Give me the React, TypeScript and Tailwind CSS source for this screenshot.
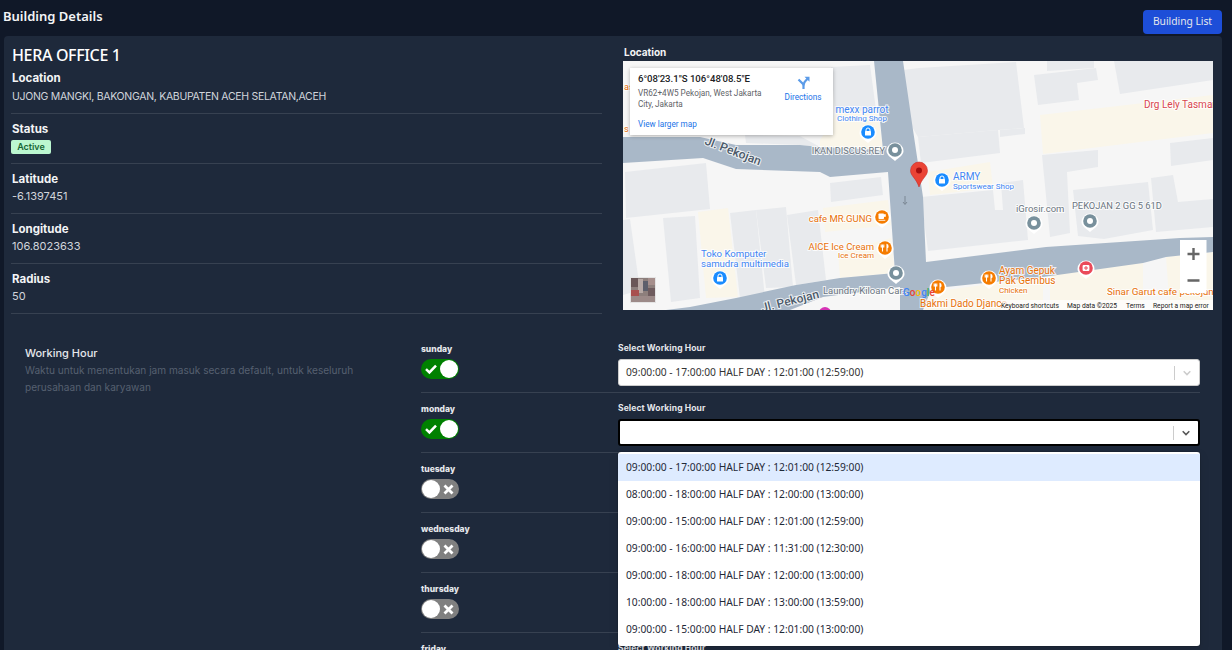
import React from "react";

const ROAD = "#a9b8c8";
const BLD = "#e8eaed";
const BEIGE = "#faf6ea";
const BLUE = "#4285f4";
const ORANGE = "#e8710a";

const beiges = [
  "1040,115 1213,95 1213,133 1043,154",
  "823,208 888,200 891,225 825,232",
  "838,253 891,238 895,273 840,278",
  "698,212 728,208 738,297 706,298",
  "839,110 877,108 883,150 820,147 820,140",
  "928,172 990,162 993,188 930,195",
  "931,292 1043,277 1043,310 925,310",
  "1050,273 1143,263 1143,310 1050,310",
  "1166,257 1213,252 1213,310 1170,310",
];
const buildings = [
  "903,70 919,68 1016,62 1024,128 998,130 918,137 905,115",
  "918,137 998,130 1000,153 921,163",
  "1000,130 1025,128 1025,134 1000,137",
  "1034,75 1096,68 1098,80 1077,83 1079,100 1038,105",
  "1114,61 1213,61 1213,80 1120,94",
  "1047,61 1094,61 1094,68 1047,71",
  "1170,143 1213,138 1213,160 1171,166",
  "1042,155 1098,150 1098,167 1067,172 1070,233 1050,237",
  "1073,190 1148,182 1153,230 1104,239 1078,236",
  "1151,178 1173,175 1178,202 1213,199 1213,227 1156,232",
  "921,197 993,190 995,210 1003,210 1001,183 1023,180 1028,240 928,251",
  "625,172 706,163 710,209 626,218",
  "830,183 881,177 883,195 831,202",
  "663,218 695,216 700,298 671,302",
  "730,213 756,210 765,298 740,298",
  "756,210 786,207 793,287 766,288",
  "787,215 818,210 826,280 796,285",
  "831,67 870,65 876,110 835,112",
  "745,135 800,136 820,147 800,145 746,143",
  "623,220 630,219 640,290 623,295",
];
const road =
  "874,61 903,61 913,130 923,197 926,262 1046,247 1180,238 1213,237 1213,252 1166,257 1143,263 1043,277 946,287 931,290 923,310 900,310 900,287 823,297 790,310 666,310 690,307 736,298 796,285 840,278 895,273 888,172 830,177 820,172 736,169 703,158 623,163 623,137 700,137 736,145 800,145 820,147 883,150";

function Pin({ x, y, color, kind }: { x: number; y: number; color: string; kind: "lock" | "ring" | "food" | "cup" | "plus" }) {
  return (
    <g transform={`translate(${x} ${y})`}>
      <path d="M-8.5 1 A8.5 8.5 0 0 1 8.5 1 C8.5 5 3.5 8 0 11 C-3.5 8 -8.5 5 -8.5 1Z" fill="#fff" />
      <circle r="6.8" fill={color} />
      {kind === "ring" && <circle r="3" fill="#fff" />}
      {kind === "lock" && (
        <g fill="#fff">
          <rect x="-3" y="-1" width="6" height="4.5" rx="0.5" />
          <path d="M-2 -1 V-2 A2 2 0 0 1 2 -2 V-1" fill="none" stroke="#fff" strokeWidth="1" />
        </g>
      )}
      {kind === "food" && (
        <g stroke="#fff" strokeWidth="1.1" fill="none">
          <path d="M-2.5 -3.5 V3.5 M-3.8 -3.5 V-1 H-1.2 V-3.5" />
          <path d="M2 3.5 V-3.5 C3.4 -3 3.4 0 2 0" />
        </g>
      )}
      {kind === "cup" && (
        <g fill="#fff">
          <rect x="-3.5" y="-3.5" width="5.5" height="5.5" rx="0.8" />
          <rect x="2" y="-3" width="1.8" height="3" rx="0.8" />
          <rect x="-3.5" y="2.8" width="6.8" height="0.9" />
        </g>
      )}
      {kind === "plus" && (
        <g fill="#fff">
          <rect x="-3.4" y="-3" width="6.8" height="6" rx="1" />
          <rect x="-0.5" y="-2" width="1" height="4" fill={color} />
          <rect x="-2" y="-0.5" width="4" height="1" fill={color} />
        </g>
      )}
    </g>
  );
}

function L({ x, y, c, s = 8.6, a, w, t, sw = 2 }: { x: number; y: number; c: string; s?: number; a?: "end" | "middle"; w?: number; t: string; sw?: number }) {
  return (
    <text
      x={x}
      y={y}
      fill={c}
      fontSize={s}
      fontWeight={w}
      textAnchor={a}
      stroke="#fff"
      strokeWidth={sw}
      strokeOpacity={0.8}
      paintOrder="stroke"
      fontFamily="Roboto, sans-serif"
    >
      {t}
    </text>
  );
}

function MapArt() {
  return (
    <svg viewBox="623 61 590 249" className="block w-full h-full" xmlns="http://www.w3.org/2000/svg">
      <rect x="623" y="61" width="590" height="249" fill="#f6f6f6" />
      {beiges.map((p) => (
        <polygon key={p} points={p} fill={BEIGE} />
      ))}
      {buildings.map((p) => (
        <polygon key={p} points={p} fill={BLD} />
      ))}
      <polygon points={road} fill={ROAD} />
      <path d="M905 196 V204 M903 202 L905 204.5 L907 202" stroke="#7b8794" strokeWidth="1" fill="none" />

      <g transform="rotate(21 733 151)">
        <L x={733} y={155} a="middle" c="#4d5b6b" s={12} t="Jl. Pekojan" w={500} />
      </g>
      <g transform="rotate(-14 790 301)">
        <L x={790} y={305} a="middle" c="#4d5b6b" s={12} t="Jl. Pekojan" w={500} />
      </g>

      <L x={1144} y={108} c="#d9464f" s={10} t="Drg Lely Tasman" />
      <L x={624} y={90} c={ORANGE} s={9} t="as" />
      <L x={624} y={132} c={ORANGE} s={9} t="s" />

      <L x={862} y={113} a="middle" c={BLUE} s={10} t="mexx parrot" />
      <L x={862} y={121} a="middle" c={BLUE} s={8} t="Clothing Shop" />
      <Pin x={868} y={132} color="#1a8cff" kind="lock" />

      <L x={885} y={154} a="end" c="#6b7580" s={9.2} t="IKAN DISCUS.REY" />
      <Pin x={895} y={150} color="#78909c" kind="ring" />

      <L x={953} y={180} c={BLUE} s={10} t="ARMY" />
      <L x={953} y={189} c={BLUE} s={8} t="Sportswear Shop" />
      <Pin x={942} y={180} color="#1a8cff" kind="lock" />

      <L x={1016} y={212} c="#6b7580" s={9.5} t="iGrosir.com" />
      <L x={1072} y={209} c="#6b7580" s={9.3} t="PEKOJAN 2 GG 5 61D" />
      <Pin x={1034} y={223} color="#78909c" kind="ring" />
      <Pin x={1090} y={221} color="#78909c" kind="ring" />

      <L x={872} y={222} a="end" c={ORANGE} s={9.5} t="cafe MR.GUNG" />
      <Pin x={882} y={217} color="#f57c00" kind="cup" />
      <L x={874} y={250} a="end" c={ORANGE} s={9.5} t="AICE Ice Cream" />
      <L x={874} y={258} a="end" c={ORANGE} s={8} t="Ice Cream" />
      <Pin x={885} y={248} color="#f57c00" kind="food" />
      <Pin x={896} y={273} color="#78909c" kind="ring" />

      <L x={701} y={257} c={BLUE} s={9.6} t="Toko Komputer" />
      <L x={701} y={267} c={BLUE} s={9.6} t="samudra multimedia" />
      <Pin x={720} y={278} color="#1a8cff" kind="lock" />

      <L x={823} y={294} c="#6b7580" s={9.5} t="Laundry Kiloan Car.." />
      <Pin x={938} y={287} color="#f57c00" kind="food" />
      <Pin x={989} y={278} color="#f57c00" kind="food" />
      <L x={999} y={274} c={ORANGE} s={10} t="Ayam Gepuk" />
      <L x={999} y={284} c={ORANGE} s={10} t="Pak Gembus" />
      <L x={999} y={293} c={ORANGE} s={8} t="Chicken" />
      <Pin x={1086} y={268} color="#ea4a5a" kind="plus" />
      <L x={1107} y={295} c={ORANGE} s={9.8} t="Sinar Garut cafe pekojan" />
      <L x={920} y={307} c={ORANGE} s={10} t="Bakmi Dado Djanco" />

      <circle cx="825" cy="313" r="6" fill="#d633b5" />

      <text x="903" y="296" fontSize="10" fontFamily="Roboto, sans-serif" fontWeight="500">
        <tspan fill="#4285f4">G</tspan>
        <tspan fill="#ea4335">o</tspan>
        <tspan fill="#fbbc05">o</tspan>
        <tspan fill="#4285f4">g</tspan>
        <tspan fill="#34a853">l</tspan>
        <tspan fill="#ea4335">e</tspan>
      </text>

      <rect x="1001" y="300" width="212" height="10" fill="#fff" fillOpacity="0.7" />
      <g fontSize="6.7" fill="#222" fontFamily="Roboto, sans-serif">
        <text x="1001" y="308">Keyboard shortcuts</text>
        <text x="1067" y="308">Map data ©2025</text>
        <text x="1126" y="308">Terms</text>
        <text x="1153" y="308">Report a map error</text>
      </g>

      <rect x="1180" y="240" width="26.5" height="53" fill="#fff" />
      <path d="M1193.5 248 V260 M1187.5 254 H1199.5 M1187.5 280.5 H1199.5" stroke="#666" strokeWidth="2.4" />

      <rect x="630" y="277" width="26" height="26" fill="#e4e4e4" />
      <rect x="631" y="278" width="24" height="24" fill="#8d7f7c" />
      <rect x="631" y="278" width="7" height="9" fill="#6a5758" />
      <rect x="638" y="279" width="5" height="14" fill="#b8aaa6" />
      <rect x="643" y="281" width="5" height="10" fill="#5d5f6b" />
      <rect x="648" y="278" width="7" height="7" fill="#a68f8c" />
      <rect x="631" y="290" width="8" height="6" fill="#a8504f" />
      <rect x="648" y="288" width="7" height="8" fill="#6f5c5e" />
      <rect x="631" y="296" width="24" height="6" fill="#9c8a88" />

      <path d="M919 187 C916 178 910.5 176 910.5 170.5 A8.5 8.5 0 0 1 927.5 170.5 C927.5 176 922 178 919 187Z" fill="#ea4335" stroke="#c5221f" strokeWidth="0.5" />
      <circle cx="919" cy="170.5" r="3" fill="#a50e0e" />
    </svg>
  );
}

function InfoWindow() {
  return (
    <div className="absolute left-[7px] top-[7px] w-[203px] h-[67px] bg-white shadow-[0_1px_4px_rgba(0,0,0,0.3)] font-['Roboto',sans-serif]">
      <div className="absolute left-[8px] top-[4px] text-[9.6px] leading-[14px] font-medium text-[#202124] whitespace-nowrap">6°08'23.1"S 106°48'08.5"E</div>
      <div className="absolute left-[8px] top-[20px] w-[130px] text-[8.2px] leading-[11px] text-[#5f6368]">VR62+4W5 Pekojan, West Jakarta City, Jakarta</div>
      <div className="absolute left-[8px] top-[50px] text-[8.2px] leading-[12px] text-[#1a73e8] whitespace-nowrap">View larger map</div>
      <div className="absolute left-[143px] top-[8px] w-[60px] flex flex-col items-center">
        <svg width="13" height="13" viewBox="0 0 13 13">
          <path d="M6.5 13 V8.5 L1.5 3.5" stroke="#5b9be8" strokeWidth="2.2" fill="none" />
          <path d="M6.5 9.5 C6.5 6.5 8 5 10.5 2.8" stroke="#5b9be8" strokeWidth="2.2" fill="none" />
          <path d="M7.5 0.8 H12.5 V5.8Z" fill="#5b9be8" />
        </svg>
        <div className="mt-[2px] text-[8.2px] leading-[12px] text-[#1a73e8] whitespace-nowrap">Directions</div>
      </div>
    </div>
  );
}

function Field({ label, value, first, narrow }: { label: string; value?: string; first?: boolean; narrow?: boolean }) {
  return (
    <div className={first ? "h-[45px] pt-[1px] border-b border-[#374151]" : "h-[50px] pt-[7px] border-b border-[#374151]"}>
      <div className="ml-px text-[11.5px] leading-4 font-bold text-[#f3f4f6] font-['Inter',sans-serif]">{label}</div>
      {value !== undefined ? (
        <div
          className={`ml-px leading-[18px] text-[#d1d5db] font-['Inter',sans-serif] whitespace-nowrap ${narrow ? "mt-[2px] text-[10.5px] tracking-[-0.3px]" : "text-[11px]"}`}
        >
          {value}
        </div>
      ) : (
        <div className="mt-[3px] w-[40px] h-[14px] rounded-[2px] bg-[#bbf7d0] flex items-center justify-center text-[9px] font-semibold text-[#166534] font-['Inter',sans-serif]">Active</div>
      )}
    </div>
  );
}

function Toggle({ on }: { on: boolean }) {
  return (
    <div className={`mt-[4px] w-[37.5px] h-[19.5px] rounded-full relative ${on ? "bg-[#008000]" : "bg-[#808080]"}`}>
      <div className={`absolute top-[1px] w-[17.5px] h-[17.5px] rounded-full bg-white ${on ? "right-[1px]" : "left-[1px]"}`} />
      {on ? (
        <svg className="absolute left-[4px] top-[3.5px]" width="12" height="12" viewBox="0 0 12 12">
          <path d="M1 6.2 L4.4 9.4 L11 2.6" stroke="#fff" strokeWidth="2.5" fill="none" />
        </svg>
      ) : (
        <svg className="absolute right-[4.5px] top-[4.5px]" width="11" height="11" viewBox="0 0 11 11">
          <path d="M1.5 1.5 L9.5 9.5 M9.5 1.5 L1.5 9.5" stroke="#fff" strokeWidth="2.8" fill="none" />
        </svg>
      )}
    </div>
  );
}

const options = [
  "09:00:00 - 17:00:00 HALF DAY : 12:01:00 (12:59:00)",
  "08:00:00 - 18:00:00 HALF DAY : 12:00:00 (13:00:00)",
  "09:00:00 - 15:00:00 HALF DAY : 12:01:00 (12:59:00)",
  "09:00:00 - 16:00:00 HALF DAY : 11:31:00 (12:30:00)",
  "09:00:00 - 18:00:00 HALF DAY : 12:00:00 (13:00:00)",
  "10:00:00 - 18:00:00 HALF DAY : 13:00:00 (13:59:00)",
  "09:00:00 - 15:00:00 HALF DAY : 12:01:00 (13:00:00)",
];

function Select({ value, open }: { value?: string; open?: boolean }) {
  return (
    <div className="relative">
      <div className={`h-[27px] bg-white rounded-[3px] flex items-center ${open ? "border-2 border-black" : "border border-[#cccccc]"}`}>
        <div className={`flex-1 text-[10.25px] text-[#333333] whitespace-nowrap font-['Noto_Sans',sans-serif] ${open ? "pl-[6px]" : "pl-[7px]"}`}>{value}</div>
        <div className="w-px h-[14px] bg-[#cccccc]" />
        <div className="w-[24px] flex justify-center">
          <svg width="12" height="12" viewBox="0 0 20 20">
            <path d="M4.5 7.2 L10 12.7 L15.5 7.2" stroke={open ? "#555555" : "#cccccc"} strokeWidth="2.6" fill="none" />
          </svg>
        </div>
      </div>
      {open && (
        <div className="absolute z-10 left-0 right-0 top-[33px] bg-white rounded-[3px] pt-[2px] pb-[3px] shadow-[0_0_0_1px_rgba(0,0,0,0.1),0_4px_11px_rgba(0,0,0,0.1)]">
          {options.map((o, i) => (
            <div
              key={i}
              className={`h-[27px] pl-[8px] flex items-center text-[10.25px] text-[#1f2937] whitespace-nowrap font-['Noto_Sans',sans-serif] ${i === 0 ? "bg-[#deebff]" : ""}`}
            >
              {o}
            </div>
          ))}
        </div>
      )}
    </div>
  );
}

function DayRow({ day, on, value, open }: { day: string; on: boolean; value?: string; open?: boolean }) {
  return (
    <div className="h-[60px] pt-[9px] border-b border-[#374151] flex">
      <div className="w-[197px]">
        <div className="text-[8.5px] leading-3 mt-[1px] font-extrabold text-[#e5e7eb] font-['Inter',sans-serif]">{day}</div>
        <Toggle on={on} />
      </div>
      <div className="flex-1">
        <div className="text-[8.5px] leading-3 font-bold text-[#e5e7eb] font-['Inter',sans-serif] tracking-[0.1px] mb-[5px]">Select Working Hour</div>
        <Select value={value} open={open} />
      </div>
    </div>
  );
}

export default function App() {
  return (
    <div className="h-[650px] overflow-hidden bg-[#101828] pl-[4px] pr-[10px]">
      <div className="h-[36px] flex justify-between items-start relative">
        <div className="ml-[-1px] mt-[6px] text-[13px] leading-5 font-semibold text-[#f3f4f6] font-['Noto_Sans',sans-serif]">Building Details</div>
        <button className="mt-[10px] w-[79px] h-[24px] rounded-[4px] bg-[#1d4ed8] text-[10.25px] text-[#e5e7eb] font-['Noto_Sans',sans-serif]">Building List</button>
      </div>
      <div className="rounded-t-[4px] bg-[#1e293b] px-[7px] pr-[9px] pt-[6px] h-[1000px]">
        <div className="flex gap-[21px]">
          <div className="w-[591px]">
            <div className="ml-px h-[27px] text-[16px] tracking-[-0.35px] leading-[27px] font-medium text-white font-['Noto_Sans',sans-serif]">HERA OFFICE 1</div>
            <Field first narrow label="Location" value="UJONG MANGKI, BAKONGAN, KABUPATEN ACEH SELATAN,ACEH" />
            <Field label="Status" />
            <Field label="Latitude" value="-6.1397451" />
            <Field label="Longitude" value="106.8023633" />
            <Field label="Radius" value="50" />
          </div>
          <div className="w-[590px]">
            <div className="ml-px pt-px h-[19px] text-[10px] leading-[19px] font-bold text-[#f3f4f6] font-['Inter',sans-serif]">Location</div>
            <div className="relative h-[249px]">
              <MapArt />
              <InfoWindow />
            </div>
          </div>
        </div>
        <div className="mt-[19px] pl-[14px] pr-[13px] flex">
          <div className="w-[396px] pt-[12px]">
            <div className="text-[11px] leading-4 font-medium text-[#e5e7eb] font-['Inter',sans-serif]">Working Hour</div>
            <div className="mt-[1px] w-[340px] text-[10.1px] leading-[17px] text-[#566070] font-['Inter',sans-serif]">
              Waktu untuk menentukan jam masuk secara default, untuk keseluruh perusahaan dan karyawan
            </div>
          </div>
          <div className="flex-1">
            <DayRow day="sunday" on value={options[0]} />
            <DayRow day="monday" on open />
            <DayRow day="tuesday" on={false} />
            <DayRow day="wednesday" on={false} />
            <DayRow day="thursday" on={false} />
            <DayRow day="friday" on={false} />
          </div>
        </div>
      </div>
    </div>
  );
}
